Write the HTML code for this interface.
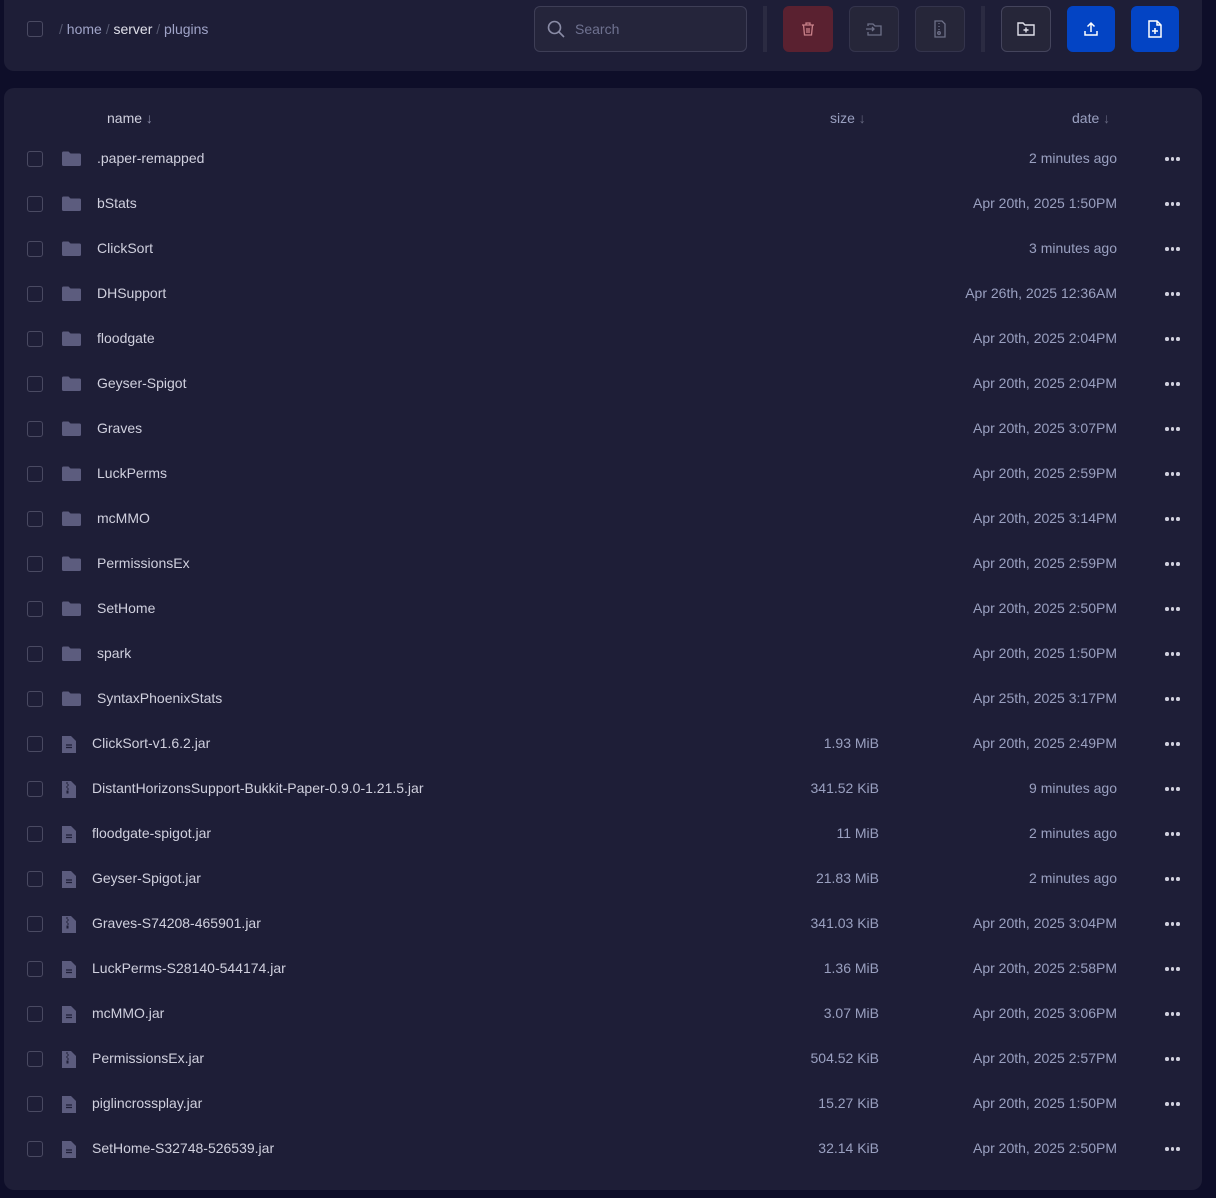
<!DOCTYPE html>
<html><head><style>
*{box-sizing:border-box;margin:0;padding:0}
body{width:1216px;height:1198px;background:#0e0e29;font-family:"Liberation Sans",sans-serif;font-size:14px;color:#d0d0de;position:relative;overflow:hidden}
.panel{position:absolute;left:4px;width:1198px;background:#1e1e37;border-radius:10px}
.cb{position:absolute;width:16px;height:16px;border:1px solid #4a4a62;border-radius:3px}
.row{position:absolute;left:0;width:1216px;height:45px}
.row .cb{left:27px;top:14px}
.nm{position:absolute;left:97px;top:13px;white-space:nowrap}
.sz{position:absolute;right:337px;top:13px;color:#9aa0c0}
.dt{position:absolute;right:99px;top:13px;color:#9aa0c0;white-space:nowrap}
.dots{position:absolute;left:1165px;top:20px;display:flex;gap:2px}
.dots i{width:3.5px;height:3.5px;border-radius:50%;background:#d0d0de}
.ic{position:absolute;left:62px;top:14px}
.btn{position:absolute;top:6px;width:50px;height:46px;border-radius:6px;border:1px solid #34344c;background:#262639;display:flex;align-items:center;justify-content:center}
.sep{position:absolute;top:6px;width:4px;height:46px;background:#2b2b42}
</style></head><body>
<div class="panel" style="top:-10px;height:81px"></div>
<div class="cb" style="left:27px;top:21px"></div>
<div style="position:absolute;left:59px;top:21px;color:#a0a4c8"><span style="color:#555870">/</span> home <span style="color:#555870">/</span> <span style="color:#e0e0ea">server</span> <span style="color:#555870">/</span> plugins</div>
<div style="position:absolute;left:534px;top:6px;width:213px;height:46px;border:1px solid #3e3e56;border-radius:6px;background:#25253b">
<svg style="position:absolute;left:12px;top:13px" width="18" height="18" viewBox="0 0 18 18" fill="none" stroke="#8a8ca6" stroke-width="1.6"><circle cx="7.5" cy="7.5" r="6"/><path d="M12 12l5 5"/></svg>
<span style="position:absolute;left:40px;top:14px;color:#6f7290">Search</span></div>
<div class="sep" style="left:763px"></div>
<div class="btn" style="left:783px;background:#5a2130;border-color:#5a2130"><svg width="16" height="16" viewBox="0 0 16 16" fill="none" stroke="#c88088" stroke-width="1.3"><path d="M2 4h12M6 4V2h4v2M3.5 4l1 10h7l1-10M7 7v5M9 7v5"/></svg></div>
<div class="btn" style="left:849px"><svg width="18" height="16" viewBox="0 0 18 16" fill="none" stroke="#6e7088" stroke-width="1.3"><path d="M3 5V3h5l2 2h6v9H3v-3M1 8h8M7 6l2 2-2 2"/></svg></div>
<div class="btn" style="left:915px"><svg width="16" height="18" viewBox="0 0 16 18" fill="none" stroke="#6e7088" stroke-width="1.3"><path d="M10 1H3v16h10V4zM7 3v1M7 6v1M7 9v1"/><circle cx="7" cy="13" r="1.3"/></svg></div>
<div class="sep" style="left:981px"></div>
<div class="btn" style="left:1001px;border-color:#44445c"><svg width="18" height="16" viewBox="0 0 18 16" fill="none" stroke="#e0e0ea" stroke-width="1.4"><path d="M1 2h5l2 2h9v10H1zM9 6.5v5M6.5 9h5"/></svg></div>
<div class="btn" style="left:1067px;width:48px;background:#0344c4;border-color:#0344c4"><svg width="16" height="16" viewBox="0 0 16 16" fill="none" stroke="#fff" stroke-width="1.5"><path d="M8 11V2M4.5 5.5L8 2l3.5 3.5M2 10v4h12v-4"/></svg></div>
<div class="btn" style="left:1131px;width:48px;background:#0344c4;border-color:#0344c4"><svg width="14" height="18" viewBox="0 0 14 18" fill="none" stroke="#fff" stroke-width="1.5"><path d="M9 1H1v16h12V5zM9 1v4h4M7 8v6M4 11h6"/></svg></div>

<div class="panel" style="top:88px;height:1102px"></div>
<div style="position:absolute;left:107px;top:110px;color:#d0d0de">name <span style="color:#8a8ca6">↓</span></div>
<div style="position:absolute;left:830px;top:110px;color:#9aa0c0">size <span style="color:#666880">↓</span></div>
<div style="position:absolute;left:1072px;top:110px;color:#9aa0c0">date <span style="color:#666880">↓</span></div>
<div id="rows"></div>
<script>
var F='<svg class="ic" width="19" height="15" viewBox="0 0 19 15"><path d="M0 2a1.5 1.5 0 011.5-1.5h5l2 2h9A1.5 1.5 0 0119 4v9.5a1.5 1.5 0 01-1.5 1.5h-16A1.5 1.5 0 010 13.5z" fill="#5c5c7e"/></svg>';
var D='<svg class="ic" width="14" height="18" viewBox="0 0 14 18" style="top:13px"><path d="M0 1h9l5 5v12H0z" fill="#5c5c7e"/><path d="M4 10h6M4 12.5h6" stroke="#1e1e37" stroke-width="1.2"/></svg>';
var Z='<svg class="ic" width="14" height="18" viewBox="0 0 14 18" style="top:13px"><path d="M0 1h9l5 5v12H0z" fill="#5c5c7e"/><path d="M5 2v2M6 4v2M5 6v2M6 8v2" stroke="#1e1e37" stroke-width="1"/><rect x="4.5" y="10.5" width="2" height="3" fill="#1e1e37"/></svg>';
var r=[['.paper-remapped','','2 minutes ago',F],['bStats','','Apr 20th, 2025 1:50PM',F],['ClickSort','','3 minutes ago',F],['DHSupport','','Apr 26th, 2025 12:36AM',F],['floodgate','','Apr 20th, 2025 2:04PM',F],['Geyser-Spigot','','Apr 20th, 2025 2:04PM',F],['Graves','','Apr 20th, 2025 3:07PM',F],['LuckPerms','','Apr 20th, 2025 2:59PM',F],['mcMMO','','Apr 20th, 2025 3:14PM',F],['PermissionsEx','','Apr 20th, 2025 2:59PM',F],['SetHome','','Apr 20th, 2025 2:50PM',F],['spark','','Apr 20th, 2025 1:50PM',F],['SyntaxPhoenixStats','','Apr 25th, 2025 3:17PM',F],
['ClickSort-v1.6.2.jar','1.93 MiB','Apr 20th, 2025 2:49PM',D],['DistantHorizonsSupport-Bukkit-Paper-0.9.0-1.21.5.jar','341.52 KiB','9 minutes ago',Z],['floodgate-spigot.jar','11 MiB','2 minutes ago',D],['Geyser-Spigot.jar','21.83 MiB','2 minutes ago',D],['Graves-S74208-465901.jar','341.03 KiB','Apr 20th, 2025 3:04PM',Z],['LuckPerms-S28140-544174.jar','1.36 MiB','Apr 20th, 2025 2:58PM',D],['mcMMO.jar','3.07 MiB','Apr 20th, 2025 3:06PM',D],['PermissionsEx.jar','504.52 KiB','Apr 20th, 2025 2:57PM',Z],['piglincrossplay.jar','15.27 KiB','Apr 20th, 2025 1:50PM',D],['SetHome-S32748-526539.jar','32.14 KiB','Apr 20th, 2025 2:50PM',D]];
var h='';r.forEach(function(x,i){var t=136+i*45;h+='<div class="row" style="top:'+(t+1)+'px"><div class="cb"></div>'+x[3]+'<div class="nm" style="left:'+(x[3]==F?97:92)+'px">'+x[0]+'</div><div class="sz">'+x[1]+'</div><div class="dt">'+x[2]+'</div><div class="dots"><i></i><i></i><i></i></div></div>';});
document.getElementById('rows').innerHTML=h;
</script>
</body></html>
